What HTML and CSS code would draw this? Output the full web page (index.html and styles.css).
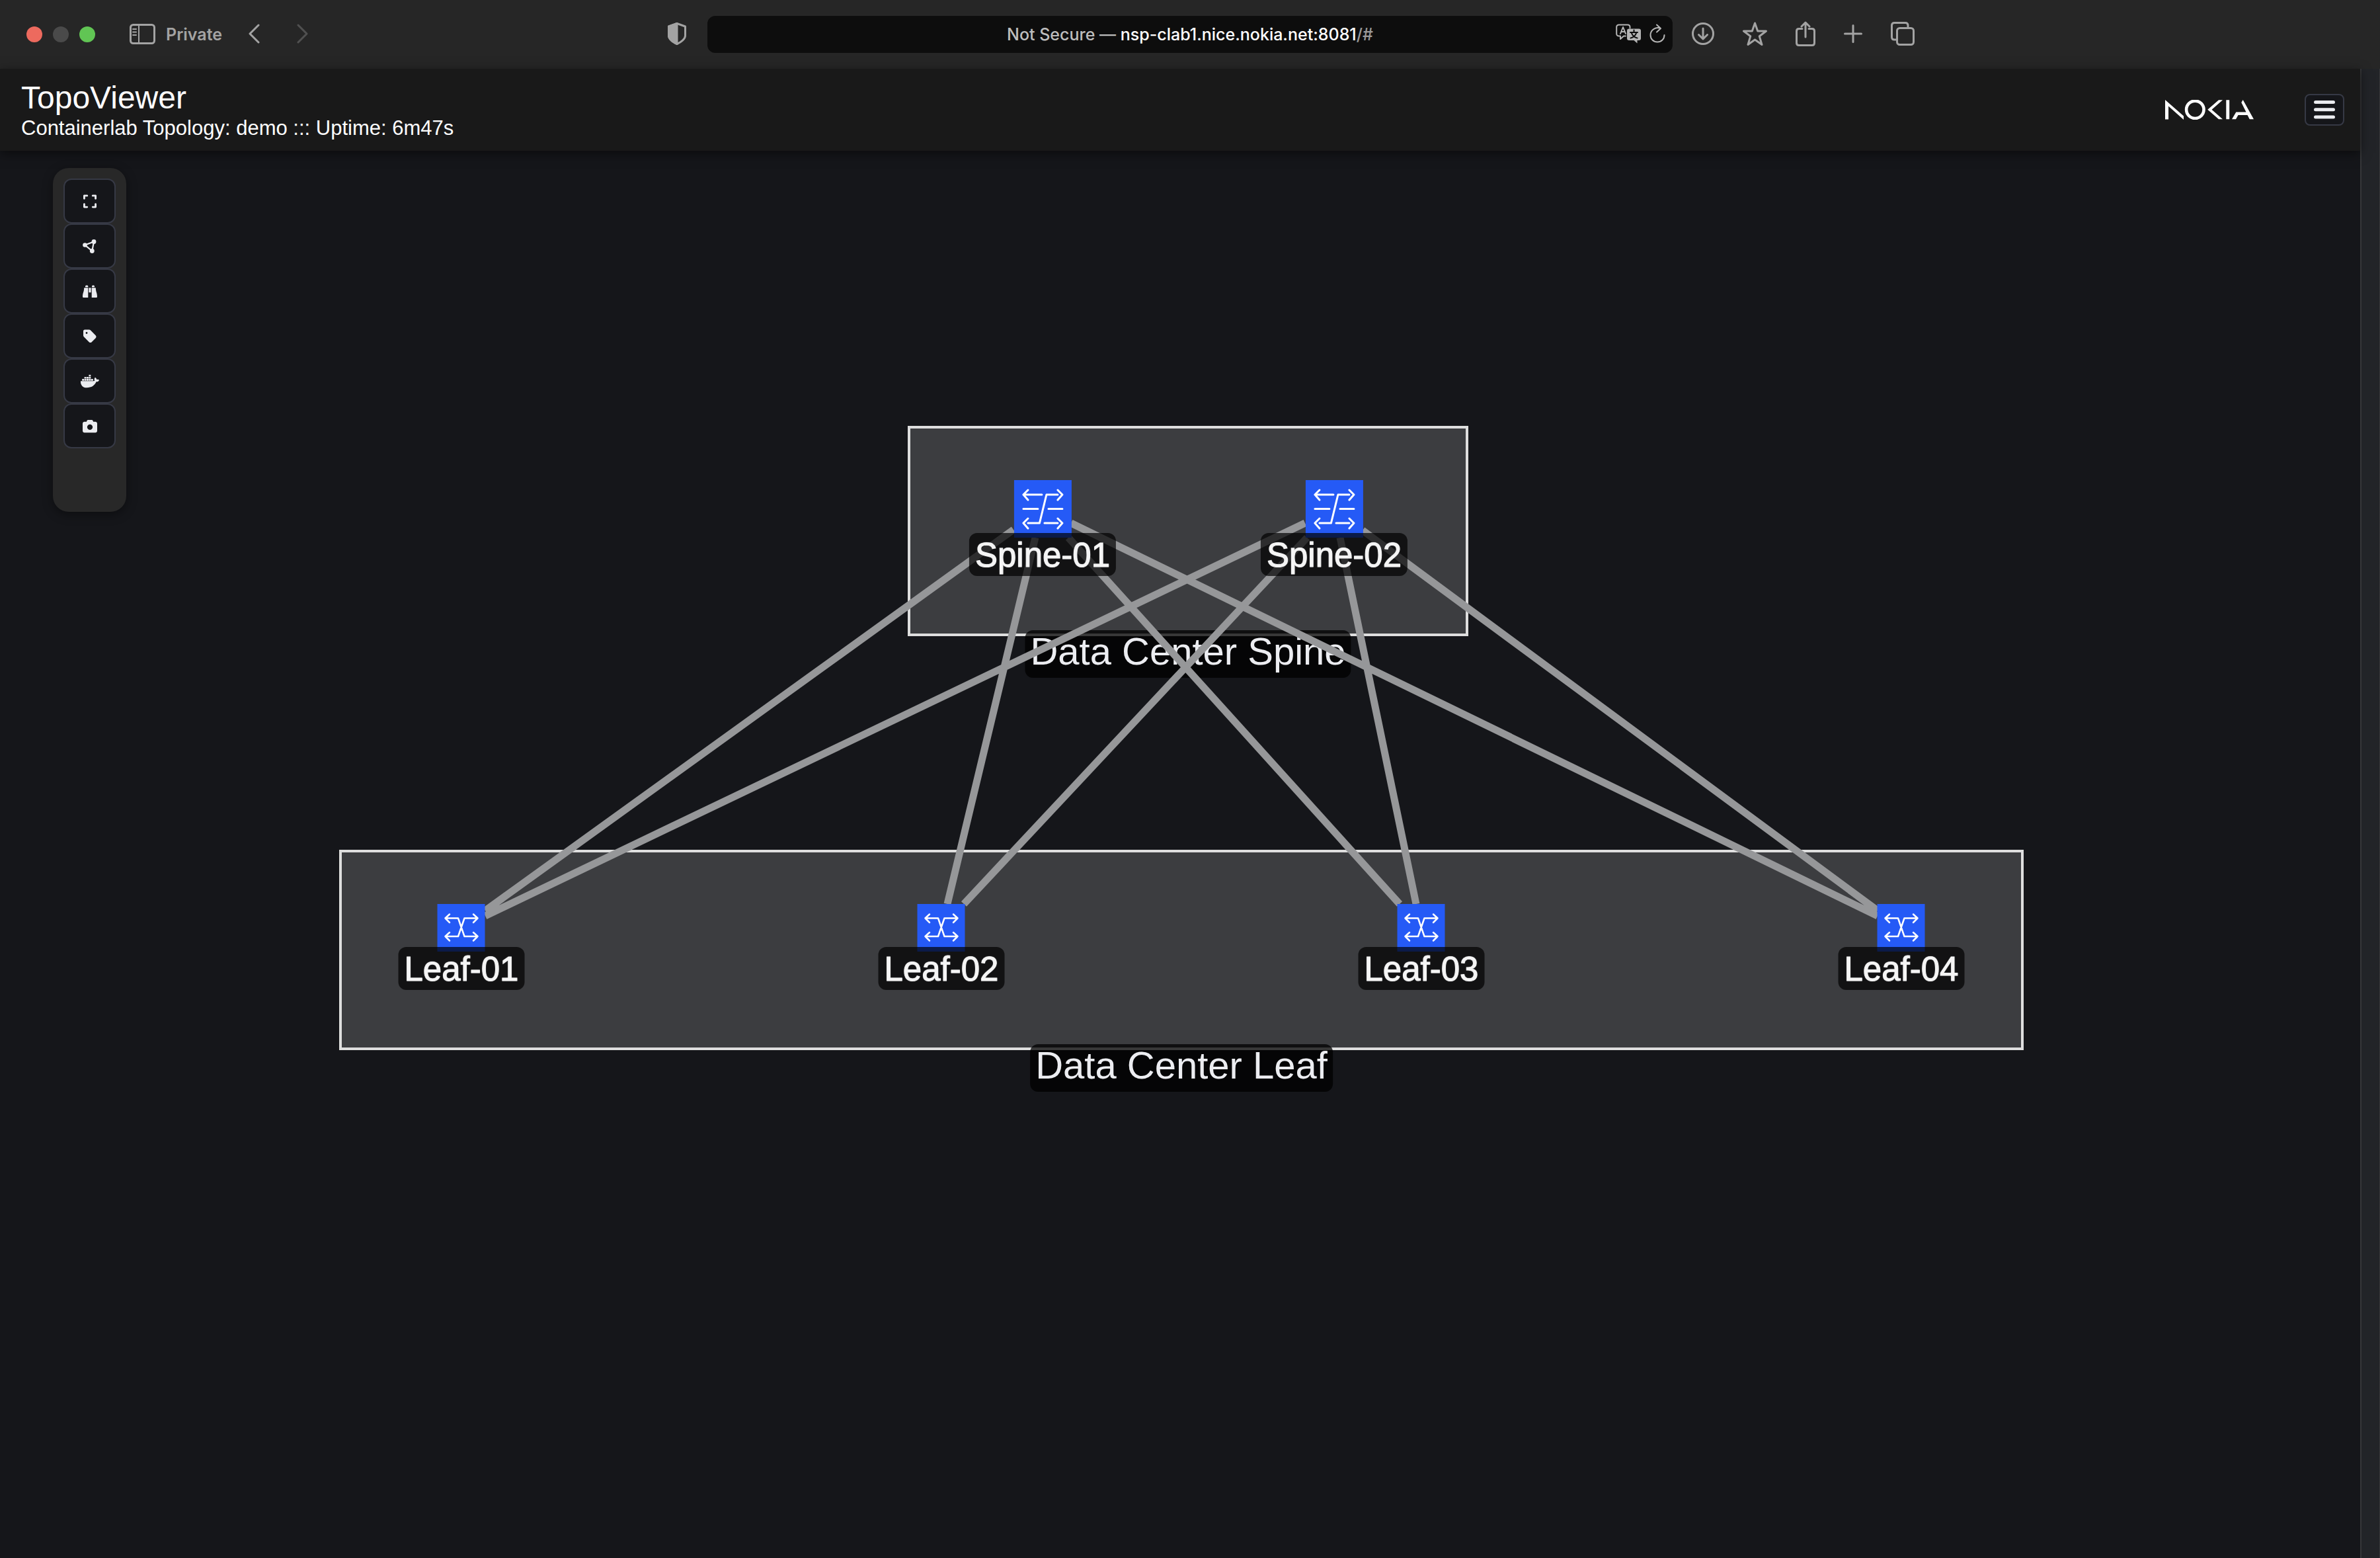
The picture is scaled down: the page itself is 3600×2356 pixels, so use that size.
FILE: index.html
```html
<!DOCTYPE html>
<html lang="en">
<head>
  <meta charset="utf-8">
  <meta name="viewport" content="width=device-width, initial-scale=1">
  <title>TopoViewer</title>
  <link rel="stylesheet" href="styles.css">
</head>
<body>
  <svg class="sprite" aria-hidden="true">
    <symbol id="spine" viewBox="0 0 87 87">
      <path d="M14 22H42M21 15L14 22L21 30M38.500 65H21M66 22H49L38.500 65M14 43.500H36M52 43.500H73M46 65H66M66 15L73 22L66 30M21 58L14 65L21 73M66 58L73 65L66 73" />
    </symbol>
    <symbol id="leaf" viewBox="0 0 72 72">
      <path d="M12 21.500H31.500L41 49H61M12 49H31.500L41 21.500H61M18.500 15.500L12 21.500L18.500 28M18.500 43L12 49L18.500 55.500M54.500 15.500L61 21.500L54.500 28M54.500 43L61 49L54.500 55.500" />
    </symbol>
  </svg>

  <div class="browser">
    <div class="browser-left">
      <span class="light light-close"></span>
      <span class="light light-min"></span>
      <span class="light light-max"></span>
      <button class="tool sidebar" aria-label="Sidebar">
        <svg width="39" height="31" viewBox="0 0 39 31"><rect x="1.500" y="1.500" width="36" height="28" rx="4" /><path d="M14 2V29M5 8H10M5 12.500H10M5 17H10" stroke-width="2" /></svg>
      </button>
      <span class="private">Private</span>
      <button class="tool back" aria-label="Back">
        <svg width="17" height="30" viewBox="0 0 17 30"><path d="M15 2L2 15L15 28" /></svg>
      </button>
      <button class="tool forward" aria-label="Forward">
        <svg width="17" height="30" viewBox="0 0 17 30"><path d="M2 2L15 15L2 28" /></svg>
      </button>
      <button class="tool shield" aria-label="Privacy report">
        <svg width="28" height="34" viewBox="0 0 28 34"><path d="M14 1.500L26.500 6V20C26.500 25 20 30 14 32.500C8 30 1.500 25 1.500 20V6Z" /><path d="M14 1.500V32.500C8 30 1.500 25 1.500 20V6Z" fill="currentColor" /></svg>
      </button>
    </div>
    <div class="address">
      <button class="url"><span class="muted">Not Secure — </span>nsp-clab1.nice.nokia.net:8081<span class="path">/#</span></button>
      <div class="address-tools">
        <button class="tool" aria-label="Translate">
          <svg width="39" height="31" viewBox="0 0 39 31"><path d="M15 18.500H12L7 23V18.500H5C2.500 18.500 1.200 17 1.200 15V5C1.200 3 2.500 1.500 5 1.500H18C20.500 1.500 21.500 3 21.500 5V6.500M7 15L11 5L15 15M8.500 12H13.500" stroke-width="2" /><path d="M20 7.500H35Q38 7.500 38 10.500V22Q38 25 35 25H32.500V29.500L27.500 25H20Q17 25 17 22V10.500Q17 7.500 20 7.500Z" fill="currentColor" stroke="none" /><path d="M27.500 9.500V12M22 13H33M24 14C25 18 29 21 32.500 21.500M31 14C30 18 26 21 22.500 21.500" stroke="#0d0d0d" stroke-width="2" /></svg>
        </button>
        <button class="tool" aria-label="Reload">
          <svg width="24" height="30" viewBox="0 0 24 30"><path d="M16.500 7C10 4 1.500 9 1.500 17C1.500 23 6 27.500 12 27.500C18 27.500 22.500 23 22.500 17M11 1.500L17 7L11 12.500" stroke-width="2" /></svg>
        </button>
      </div>
    </div>
    <div class="browser-right">
      <button class="tool" aria-label="Downloads">
        <svg width="34" height="34" viewBox="0 0 34 34"><circle cx="17" cy="17" r="15.500" /><path d="M17 9V25M10.500 18.500L17 25L23.500 18.500" /></svg>
      </button>
      <button class="tool" aria-label="Bookmark">
        <svg width="37" height="37" viewBox="0 0 37 37"><path d="M18.500 2L22.700 14H35.500L25.300 21.800L29 34.500L18.500 27L8 34.500L11.700 21.800L1.500 14H14.300Z" /></svg>
      </button>
      <button class="tool" aria-label="Share">
        <svg width="30" height="38" viewBox="0 0 30 38"><path d="M10 11.500H5Q1.500 11.500 1.500 15V33Q1.500 36.500 5 36.500H25Q28.500 36.500 28.500 33V15Q28.500 11.500 25 11.500H20M15 24V2M9 8L15 2L21 8" /></svg>
      </button>
      <button class="tool" aria-label="New tab">
        <svg width="28" height="28" viewBox="0 0 28 28"><path d="M14 1.500V26.500M1.500 14H26.500" /></svg>
      </button>
      <button class="tool" aria-label="Tab overview">
        <svg width="36" height="36" viewBox="0 0 36 36"><rect x="9.500" y="9.500" width="25" height="25" rx="4" /><path d="M9 27H5.500Q1.500 27 1.500 23V5.500Q1.500 1.500 5.500 1.500H22Q26 1.500 26 5.500V9" /></svg>
      </button>
    </div>
  </div>

  <div class="page">
    <div class="app">
      <header class="header">
        <div class="titles">
          <h1 class="title">TopoViewer</h1>
          <p class="subtitle">Containerlab Topology: demo ::: Uptime: 6m47s</p>
        </div>
        <svg class="logo" width="134" height="30" viewBox="0 0 134 30" role="img" aria-label="Nokia">
          <path d="M0 0L28 24.500V30L5 9.500V29.500H0ZM81 .300H87L70.500 14.700L87 29.300H81L64.300 14.700ZM92.300 .300H97.200V29.300H92.300ZM117.700 0L134 29.300H127.700L124.500 23H110.500L107 29.300H101L107.300 18.500H122.500L115.300 4Z" />
          <circle cx="45.300" cy="14.800" r="13.200" />
        </svg>
        <button class="btn menu" aria-label="Menu">
          <svg width="32" height="28" viewBox="0 0 32 28"><path d="M0 2.500Q0 0 2.500 0H29.500Q32 0 32 2.500T29.500 5H2.500Q0 5 0 2.500ZM0 13.800Q0 11.300 2.500 11.300H29.500Q32 11.300 32 13.800T29.500 16.300H2.500Q0 16.300 0 13.800ZM0 25Q0 22.500 2.500 22.500H29.500Q32 22.500 32 25T29.500 27.500H2.500Q0 27.500 0 25Z" /></svg>
        </button>
      </header>

      <main class="canvas">
        <section class="group group-spine"><h2 class="group-label">Data Center Spine</h2></section>
        <section class="group group-leaf"><h2 class="group-label">Data Center Leaf</h2></section>

        <svg class="edges" aria-hidden="true">
          <path d="M1533 573L734 1149M1566 585L1433 1139M1616 585L2117 1139M1620 563L2840 1157M1974 563L734 1157M1977 585L1458 1139M2027 585L2142 1139M2061 574L2840 1149" />
        </svg>

        <div class="node node-spine spine-1"><svg class="node-icon"><use href="#spine" /></svg><span class="node-label">Spine-01</span></div>
        <div class="node node-spine spine-2"><svg class="node-icon"><use href="#spine" /></svg><span class="node-label">Spine-02</span></div>
        <div class="node node-leaf leaf-1"><svg class="node-icon"><use href="#leaf" /></svg><span class="node-label">Leaf-01</span></div>
        <div class="node node-leaf leaf-2"><svg class="node-icon"><use href="#leaf" /></svg><span class="node-label">Leaf-02</span></div>
        <div class="node node-leaf leaf-3"><svg class="node-icon"><use href="#leaf" /></svg><span class="node-label">Leaf-03</span></div>
        <div class="node node-leaf leaf-4"><svg class="node-icon"><use href="#leaf" /></svg><span class="node-label">Leaf-04</span></div>

        <nav class="palette" aria-label="Viewport tools">
          <button class="btn" aria-label="Fit to screen">
            <svg width="20" height="23" viewBox="0 0 448 512"><path d="M32 32C14.300 32 0 46.300 0 64v96c0 17.700 14.300 32 32 32s32-14.300 32-32V96h64c17.700 0 32-14.300 32-32s-14.300-32-32-32H32zM64 352c0-17.700-14.300-32-32-32s-32 14.300-32 32v96c0 17.700 14.300 32 32 32h96c17.700 0 32-14.300 32-32s-14.300-32-32-32H64V352zM320 32c-17.700 0-32 14.300-32 32s14.300 32 32 32h64v64c0 17.700 14.300 32 32 32s32-14.300 32-32V64c0-17.700-14.300-32-32-32H320zM448 352c0-17.700-14.300-32-32-32s-32 14.300-32 32v64H320c-17.700 0-32 14.300-32 32s14.300 32 32 32h96c17.700 0 32-14.300 32-32V352z" /></svg>
          </button>
          <button class="btn" aria-label="Layout">
            <svg width="22" height="23" viewBox="0 0 22 22"><circle cx="3.500" cy="9" r="3.300" /><circle cx="17" cy="4" r="3.400" /><circle cx="14.300" cy="18" r="3.400" /><path d="M3.500 9L17 4L14.300 18Z" fill="none" stroke="currentColor" stroke-width="2.200" /></svg>
          </button>
          <button class="btn" aria-label="Find node">
            <svg width="22" height="23" viewBox="0 0 22 22"><path d="M4 3.600Q4 2 5.500 2H7Q8.300 2 8.300 3.600V4.800H4ZM14 3.600Q14 2 15.300 2H16.700Q18 2 18 3.600V4.800H14ZM2.200 5.800H8.300V20.500H1.300Q0 20.500 0 19.200C0 13 2 13 2.200 5.800ZM19.800 5.800H13.700V20.500H20.700Q22 20.500 22 19.200C22 13 20 13 19.800 5.800ZM9.400 5.800H12.600V12.800H9.400Z" /></svg>
          </button>
          <button class="btn" aria-label="Labels">
            <svg width="20" height="23" viewBox="0 0 448 512"><path d="M0 80V229.500c0 17 6.700 33.300 18.700 45.300l176 176c25 25 65.500 25 90.500 0L418.700 317.300c25-25 25-65.500 0-90.500l-176-176c-12-12-28.300-18.700-45.300-18.700H48C21.500 32 0 53.500 0 80zm112 32a32 32 0 1 1 0 64 32 32 0 1 1 0-64z" /></svg>
          </button>
          <button class="btn" aria-label="Containers">
            <svg width="28" height="23" viewBox="0 0 640 512"><path d="M349.900 236.300h-66.100v-59.400h66.100v59.400zm0-204.300h-66.100v60.700h66.100V32zm78.200 144.800H362v59.400h66.100v-59.400zm-156.300-72.100h-66.100v60.100h66.100v-60.100zm78.100 0h-66.100v60.100h66.100v-60.100zm276.800 100c-14.400-9.700-47.600-13.200-73.100-8.400-3.300-24-16.700-44.900-41.100-63.700l-14-9.300-9.300 14c-18.400 27.800-23.400 73.600-3.700 103.800-8.700 4.700-25.800 11.100-48.400 10.700H2.400c-8.700 50.800 5.800 116.800 44 162.100 37.100 43.900 92.700 66.200 165.400 66.200 157.400 0 273.900-72.500 328.400-204.200 21.400.400 67.600.100 91.300-45.200 1.500-2.500 6.600-13.200 8.500-17.100l-13.300-8.900zm-511.100-27.900h-66v59.400h66.100v-59.400zm78.100 0h-66.100v59.400h66.100v-59.400zm78.100 0h-66.100v59.400h66.100v-59.400zm-78.100-72.100h-66.100v60.100h66.100v-60.100z" /></svg>
          </button>
          <button class="btn" aria-label="Capture">
            <svg width="22" height="23" viewBox="0 0 512 512"><path d="M149.100 64.800L138.700 96H64C28.700 96 0 124.700 0 160V416c0 35.300 28.700 64 64 64H448c35.300 0 64-28.700 64-64V160c0-35.300-28.700-64-64-64H373.300L362.900 64.800C356.400 45.200 338.100 32 317.400 32H194.600c-20.700 0-39 13.200-45.500 32.800zM256 192a96 96 0 1 1 0 192 96 96 0 1 1 0-192z" /></svg>
          </button>
        </nav>
      </main>
    </div>
    <div class="scrollbar"></div>
  </div>
</body>
</html>
```
FILE: styles.css
```css
* { box-sizing: border-box; }

body {
  margin: 0;
  min-height: 100vh;
  display: flex;
  flex-direction: column;
  background: #15161a;
  color: #fff;
  font-family: "Liberation Sans", Arial, sans-serif;
}

h1, h2, p { margin: 0; font-weight: 400; }

button {
  padding: 0;
  border: 0;
  background: none;
  color: inherit;
  font: inherit;
}

svg { display: block; }

.sprite { position: absolute; width: 0; height: 0; }

/* Browser bar */
.browser {
  display: grid;
  grid-template-columns: 1fr minmax(0, 1460px) 1fr;
  align-items: center;
  height: 104px;
  background: #262626;
  color: #a3a3a3;
  font-family: Inter, "Liberation Sans", sans-serif;
  font-size: 25px;
}

.browser-left {
  display: flex;
  align-items: center;
  padding: 0 32px 0 40px;
}

.light {
  width: 24px;
  height: 24px;
  margin-right: 16px;
  border-radius: 50%;
}

.light-close { background: #ed6a5e; }
.light-min { background: #4a4a4a; }
.light-max { background: #61c554; }

.tool { padding-bottom: 2px; }

.tool svg {
  fill: none;
  stroke: currentColor;
  stroke-width: 3;
  stroke-linecap: round;
  stroke-linejoin: round;
}

.sidebar { margin: 0 16px 0 36px; }
.private { font-weight: 600; }
.back { margin-left: 40px; }
.forward { margin-left: 56px; color: #505050; }
.shield { margin-left: auto; }

.address {
  display: grid;
  grid-template-columns: 86px 1fr 86px;
  align-items: center;
  height: 56px;
  border-radius: 12px;
  background: #0d0d0d;
}

.url {
  grid-column: 2;
  color: #fff;
  font-weight: 500;
  white-space: pre;
}

.muted { color: #bdbdbd; }
.path { color: #9a9a9a; }

.address-tools {
  display: flex;
  gap: 12px;
  color: #b5b5b5;
}

.browser-right {
  display: flex;
  align-items: center;
  gap: 43px;
  padding-left: 29px;
}

/* Page */
.page {
  flex: 1;
  display: grid;
  grid-template-columns: 1fr 30px;
}

.app {
  display: flex;
  flex-direction: column;
  min-width: 0;
}

.scrollbar {
  border-left: 2px solid #363739;
  border-right: 1px solid #363739;
  background: #222428;
}

.header {
  position: relative;
  z-index: 1;
  display: flex;
  align-items: center;
  height: 124px;
  padding: 0 24px 0 32px;
  background: #191919;
  box-shadow: 0 4px 16px rgba(0, 0, 0, 0.5);
}

.titles { flex: 1; }
.title { font-size: 48px; line-height: 56px; }
.subtitle { font-size: 31px; line-height: 36px; }

.logo { margin-right: 77px; fill: #fff; }
.logo circle { fill: none; stroke: #fff; stroke-width: 4.600; }

.btn {
  display: flex;
  align-items: center;
  justify-content: center;
  border: 2px solid #363945;
  border-radius: 12px;
  background: #15161a;
  color: #ebecf0;
}

.btn svg { fill: currentColor; }

.menu { width: 60px; height: 48px; border-radius: 8px; }

/* Topology canvas */
.canvas {
  position: relative;
  flex: 1;
  overflow: hidden;
  padding: 26px 80px;
}

.palette {
  position: relative;
  display: grid;
  grid-auto-rows: 68px;
  width: 111px;
  padding: 16px 16px 96px;
  border-radius: 24px;
  background: #282828;
  box-shadow: 0 4px 16px rgba(0, 0, 0, 0.4);
}

.group {
  position: absolute;
  border: 4px solid #dedede;
  background: #3c3d40;
}

.group-spine { left: 1373px; top: 416px; width: 848px; height: 318px; }
.group-leaf { left: 513px; top: 1057px; width: 2548px; height: 303px; }

.group-label {
  position: absolute;
  left: 50%;
  top: 100%;
  margin-top: -5px;
  padding: 0 8px 9px;
  border-radius: 12px;
  background: rgba(0, 0, 0, 0.75);
  color: #ecedf1;
  font-size: 58px;
  line-height: 63px;
  white-space: nowrap;
  transform: translateX(-50%);
}

.edges {
  position: absolute;
  left: 0;
  top: 0;
  width: 100%;
  height: 100%;
  fill: none;
  stroke: #969799;
  stroke-width: 11;
}

.node {
  position: absolute;
  display: flex;
  flex-direction: column;
  align-items: center;
  transform: translateX(-50%);
}

.node-icon {
  background: #255af6;
  fill: none;
  stroke: #fff;
  stroke-width: 3;
  stroke-linecap: round;
  stroke-linejoin: round;
}

.node-spine { top: 498px; }
.node-spine .node-icon { width: 87px; height: 87px; }
.node-leaf { top: 1139px; }
.node-leaf .node-icon { width: 72px; height: 72px; stroke-width: 2.500; }

.spine-1 { left: 1577px; }
.spine-2 { left: 2018px; }
.leaf-1 { left: 698px; }
.leaf-2 { left: 1424px; }
.leaf-3 { left: 2150px; }
.leaf-4 { left: 2876px; }

.node-label {
  position: relative;
  margin-top: -7px;
  padding: 2px 9px 0;
  border-radius: 12px;
  background: rgba(0, 0, 0, 0.7);
  color: #f5f5f5;
  font-size: 51px;
  line-height: 63px;
  white-space: nowrap;
  -webkit-text-stroke: 1px #f5f5f5;
  text-shadow: 0 0 2px #5a5b5e, 0 0 2px #5a5b5e;
}
```
